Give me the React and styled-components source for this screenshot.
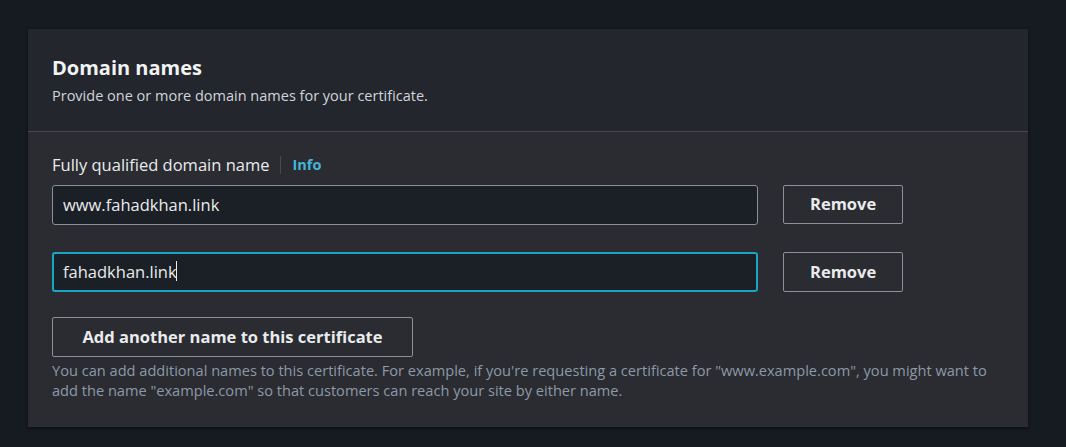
import React from 'react'
import styled, { createGlobalStyle } from 'styled-components'

const Global = createGlobalStyle`
  html, body {
    margin: 0;
    padding: 0;
    background: #161a21;
  }
  body {
    font-family: "Open Sans", "Noto Sans", sans-serif;
    color: #e9ebed;
  }
`

const Page = styled.div`
  height: 447px;
  padding: 29px 38px 0 28px;
  box-sizing: border-box;
`

const Card = styled.section`
  background: #2a2c31;
  box-shadow: 0 1px 3px rgba(0, 0, 0, 0.5);
  height: 398px;
`

const Header = styled.header`
  background: #23262d;
  border-bottom: 1px solid #464950;
  padding: 25px 24px 25px;
`

const Title = styled.h2`
  margin: 0;
  font-size: 20px;
  font-weight: 700;
  line-height: 28px;
  color: #f2f3f3;
`

const Subtitle = styled.p`
  margin: 4px 0 0;
  font-size: 14.5px;
  line-height: 20px;
  color: #d1d5db;
`

const Body = styled.div`
  padding: 21px 24px 0;
`

const Label = styled.div`
  display: flex;
  align-items: center;
  font-size: 16.5px;
  line-height: 24px;
  color: #e9ebed;
  margin-bottom: 8px;
`

const InfoLink = styled.a`
  margin-left: 11px;
  padding-left: 11px;
  border-left: 1px solid #464950;
  color: #44b4d8;
  font-size: 14.5px;
  font-weight: 700;
  line-height: 18px;
  text-decoration: none;
`

const Row = styled.div`
  display: flex;
  align-items: flex-start;
  gap: 25px;
  margin-bottom: ${p => p.$last ? '25px' : '27px'};
`

const Field = styled.div`
  width: 706px;
  height: 40px;
  box-sizing: border-box;
  background: #1b1f26;
  border: ${p => p.$focus ? '2px solid #1ba3c6' : '1px solid #8d9096'};
  border-radius: 3px;
  display: flex;
  align-items: center;
  padding: 0 0 2px ${p => p.$focus ? '9px' : '10px'};
  font-size: 16.5px;
  color: #e9ebed;
`

const Caret = styled.span`
  display: inline-block;
  width: 1px;
  height: 20px;
  background: #e9ebed;
  margin-left: -1px;
  vertical-align: middle;
`

const Button = styled.button`
  height: ${p => p.$tall ? '40px' : '39px'};
  padding: 0 ${p => p.$wide ? '25px' : '26px'} 2px;
  min-width: ${p => p.$wide ? '361px' : '120px'};
  box-sizing: border-box;
  background: transparent;
  border: 1px solid #8d9096;
  border-radius: 2px;
  color: #e9ebed;
  font-family: inherit;
  font-size: 16.5px;
  font-weight: 700;
`

const Help = styled.p`
  margin: 3px 0 0;
  max-width: 950px;
  font-size: 14.6px;
  line-height: 20px;
  color: #8d99a8;
`

const App = () => (
  <Page>
    <Global />
    <Card>
      <Header>
        <Title>Domain names</Title>
        <Subtitle>Provide one or more domain names for your certificate.</Subtitle>
      </Header>
      <Body>
        <Label>
          Fully qualified domain name
          <InfoLink href="#">Info</InfoLink>
        </Label>
        <Row>
          <Field>www.fahadkhan.link</Field>
          <Button>Remove</Button>
        </Row>
        <Row $last>
          <Field $focus>fahadkhan.link<Caret /></Field>
          <Button $tall>Remove</Button>
        </Row>
        <Button $wide $tall>Add another name to this certificate</Button>
        <Help>
          You can add additional names to this certificate. For example, if you're requesting a certificate for "www.example.com", you might want to add the name "example.com" so that customers can reach your site by either name.
        </Help>
      </Body>
    </Card>
  </Page>
)

export default App
